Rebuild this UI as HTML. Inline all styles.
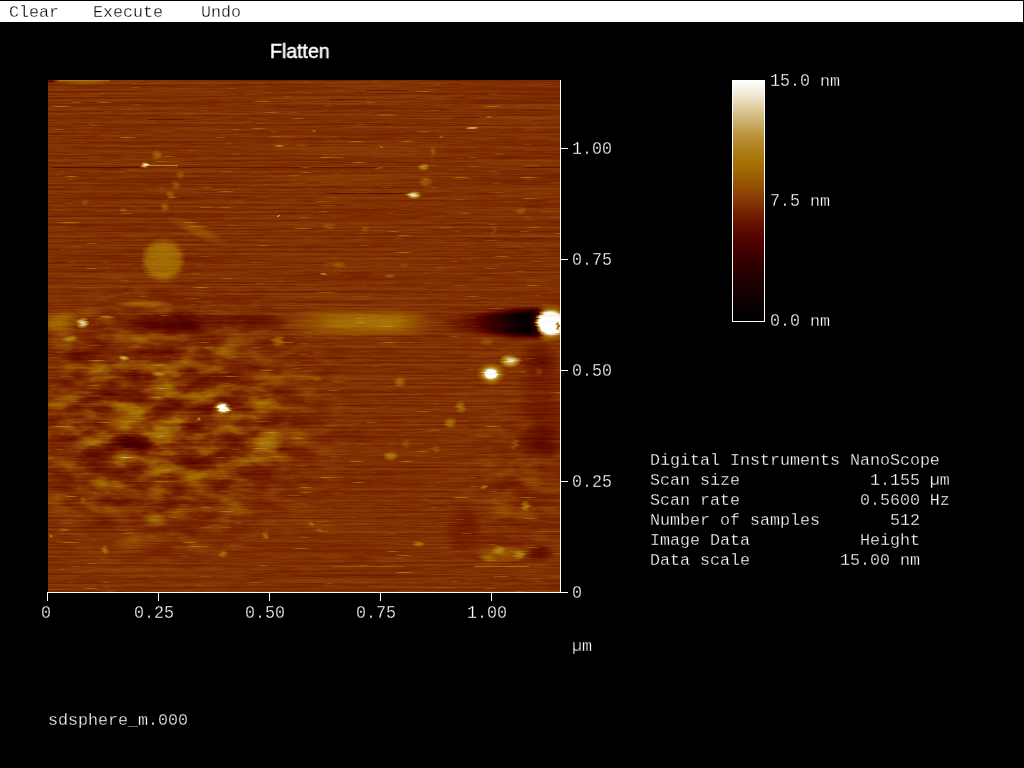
<!DOCTYPE html>
<html lang="en"><head><meta charset="utf-8"><title>Flatten - sdsphere_m.000</title>
<style>
html,body{margin:0;padding:0;background:#000;}
body{width:1024px;height:768px;overflow:hidden;position:relative;color:#fff;}
#screen{position:absolute;left:0;top:0;width:1024px;height:768px;will-change:transform;}
#menu{position:absolute;left:0;top:1px;width:1023px;height:21px;background:#fff;}
.m{position:absolute;font-family:"Liberation Mono",monospace;font-size:16.67px;line-height:20px;height:20px;white-space:pre;margin-top:-14px;letter-spacing:0px;-webkit-text-stroke:0.3px #000;}
.d{transform:scaleY(1.09);transform-origin:0 14px;}
.dg{display:inline-block;transform:scaleY(1.09);transform-origin:0 14px;}
.ln{position:absolute;background:#fff;}
#title{position:absolute;left:270px;top:39px;font-family:"Liberation Sans",sans-serif;font-size:20px;line-height:24px;white-space:pre;transform:scaleX(0.975);transform-origin:0 0;-webkit-text-stroke:0.45px #fff;}
</style></head>
<body>
<div id="screen">
<div id="menu"></div>
<div class="m" style="left:9px;top:17px;color:#000;-webkit-text-stroke-color:#fff;">Clear</div>
<div class="m" style="left:93px;top:17px;color:#000;-webkit-text-stroke-color:#fff;">Execute</div>
<div class="m" style="left:201px;top:17px;color:#000;-webkit-text-stroke-color:#fff;">Undo</div>
<div id="title">Flatten</div>
<svg id="afm" width="512" height="512" viewBox="0 0 512 512" style="position:absolute;left:48px;top:80px;display:block">
<defs>
<radialGradient id="gw"><stop offset="0" stop-color="#fff" stop-opacity="1"/><stop offset="0.45" stop-color="#fff" stop-opacity="0.7"/><stop offset="1" stop-color="#fff" stop-opacity="0"/></radialGradient>
<radialGradient id="gk"><stop offset="0" stop-color="#000" stop-opacity="1"/><stop offset="0.45" stop-color="#000" stop-opacity="0.7"/><stop offset="1" stop-color="#000" stop-opacity="0"/></radialGradient>
<radialGradient id="gW"><stop offset="0" stop-color="#fff" stop-opacity="1"/><stop offset="0.7" stop-color="#fff" stop-opacity="1"/><stop offset="1" stop-color="#fff" stop-opacity="0"/></radialGradient>
<radialGradient id="gK"><stop offset="0" stop-color="#000" stop-opacity="1"/><stop offset="0.7" stop-color="#000" stop-opacity="0.9"/><stop offset="1" stop-color="#000" stop-opacity="0"/></radialGradient>
<linearGradient id="band" x1="0" x2="1" y1="0" y2="0"><stop offset="0" stop-color="#fff" stop-opacity="0"/><stop offset="0.3" stop-color="#fff" stop-opacity="0.24"/><stop offset="0.75" stop-color="#fff" stop-opacity="0.27"/><stop offset="1" stop-color="#fff" stop-opacity="0"/></linearGradient>
<linearGradient id="shadow" x1="0" x2="1" y1="0" y2="0"><stop offset="0" stop-color="#000" stop-opacity="0"/><stop offset="0.25" stop-color="#000" stop-opacity="0.15"/><stop offset="0.42" stop-color="#000" stop-opacity="0.3"/><stop offset="0.66" stop-color="#000" stop-opacity="0.66"/><stop offset="0.82" stop-color="#000" stop-opacity="0.93"/><stop offset="1" stop-color="#000" stop-opacity="1"/></linearGradient>
<filter id="bl3" x="-10%" y="-30%" width="120%" height="160%" color-interpolation-filters="sRGB"><feGaussianBlur stdDeviation="2.5 2.6"/></filter>
<filter id="rough" x="0" y="0" width="512" height="512" filterUnits="userSpaceOnUse" color-interpolation-filters="sRGB">
<feTurbulence type="fractalNoise" baseFrequency="0.02 0.5" numOctaves="2" seed="5" result="t"/>
<feColorMatrix in="t" type="matrix" values="1 0 0 0 0  0 0.3 0 0 0.35  0 0 0 0 0  0 0 0 0 1" result="d"/>
<feDisplacementMap in="SourceGraphic" in2="d" scale="7" xChannelSelector="R" yChannelSelector="G"/>
</filter>
<filter id="mot" x="0" y="0" width="512" height="512" filterUnits="userSpaceOnUse" color-interpolation-filters="sRGB">
<feTurbulence type="fractalNoise" baseFrequency="0.03 0.075" numOctaves="3" seed="7" result="t"/>
<feColorMatrix in="t" type="matrix" values="0 0 0 0 1  0 0 0 0 1  0 0 0 0 1  1.35 0 0 0 -0.675" result="L"/>
<feColorMatrix in="t" type="matrix" values="0 0 0 0 0  0 0 0 0 0  0 0 0 0 0  -0.85 0 0 0 0.425" result="D"/>
<feMerge result="m"><feMergeNode in="L"/><feMergeNode in="D"/></feMerge>
<feComposite in="m" in2="SourceGraphic" operator="in"/>
</filter>
<filter id="cm" x="0" y="0" width="512" height="512" filterUnits="userSpaceOnUse" color-interpolation-filters="sRGB">
<feTurbulence type="fractalNoise" baseFrequency="0.04 0.9" numOctaves="2" seed="3" result="t"/>
<feColorMatrix in="t" type="matrix" values="1 0 0 0 0  1 0 0 0 0  1 0 0 0 0  0 0 0 0 1" result="n"/>
<feTurbulence type="fractalNoise" baseFrequency="0.005 0.45" numOctaves="2" seed="11" result="t2"/>
<feColorMatrix in="t2" type="matrix" values="1 0 0 0 0  1 0 0 0 0  1 0 0 0 0  0 0 0 0 1" result="n2"/>
<feComposite in="SourceGraphic" in2="n" operator="arithmetic" k1="0" k2="1" k3="0.07" k4="-0.035" result="h1"/>
<feComposite in="h1" in2="n2" operator="arithmetic" k1="0" k2="1" k3="0.11" k4="-0.055" result="h2"/>
<feTurbulence type="fractalNoise" baseFrequency="0.03 0.8" numOctaves="2" seed="21" result="t3"/>
<feColorMatrix in="t3" type="matrix" values="6 0 0 0 -4.32  6 0 0 0 -4.32  6 0 0 0 -4.32  0 0 0 0 1" result="n3"/>
<feComposite in="h2" in2="n3" operator="arithmetic" k1="0" k2="1" k3="0.22" k4="0" result="h"/>
<feComponentTransfer in="h">
<feFuncR type="table" tableValues="0.000 0.018 0.035 0.056 0.082 0.109 0.139 0.171 0.204 0.244 0.285 0.324 0.362 0.400 0.436 0.476 0.525 0.557 0.580 0.603 0.630 0.653 0.666 0.685 0.706 0.740 0.774 0.815 0.856 0.897 0.938 0.969 1.000"/>
<feFuncG type="table" tableValues="0.000 0.000 0.000 0.000 0.000 0.000 0.000 0.000 0.000 0.003 0.006 0.015 0.042 0.071 0.112 0.157 0.216 0.264 0.311 0.358 0.403 0.444 0.469 0.504 0.541 0.598 0.654 0.714 0.775 0.839 0.905 0.953 1.000"/>
<feFuncB type="table" tableValues="0.000 0.000 0.000 0.000 0.000 0.000 0.000 0.000 0.000 0.000 0.000 0.000 0.000 0.000 0.000 0.004 0.020 0.021 0.013 0.009 0.015 0.026 0.056 0.115 0.176 0.271 0.365 0.468 0.572 0.691 0.814 0.908 1.000"/>
</feComponentTransfer>
</filter>
</defs>
<g filter="url(#cm)">
<rect width="512" height="512" fill="#7c7c7c"/>
<g filter="url(#rough)">
<g filter="url(#mot)">
<ellipse cx="115" cy="342" rx="205" ry="152" fill="url(#gw)" fill-opacity="1"/>
<ellipse cx="470" cy="400" rx="70" ry="110" fill="url(#gw)" fill-opacity="0.4"/>
</g>

<rect x="236" y="232" width="150" height="21" rx="6" fill="url(#band)" filter="url(#bl3)"/>
<path d="M388,242 C 400,237 440,232 494,230 L 494,256 C 440,255 400,249 388,242 Z" fill="url(#shadow)" filter="url(#bl3)"/>

<ellipse cx="35" cy="2" rx="30" ry="3" fill="url(#gw)" fill-opacity="0.2"/>
<ellipse cx="3" cy="1" rx="6" ry="2" fill="url(#gk)" fill-opacity="0.3"/>
<ellipse cx="128" cy="243" rx="52" ry="13" fill="url(#gk)" fill-opacity="0.32"/>
<ellipse cx="200" cy="241" rx="45" ry="9" fill="url(#gk)" fill-opacity="0.18"/>
<ellipse cx="32" cy="277" rx="18" ry="10" fill="url(#gk)" fill-opacity="0.2"/>
<ellipse cx="66" cy="303" rx="10" ry="6" fill="url(#gk)" fill-opacity="0.2"/>
<ellipse cx="81" cy="364" rx="32" ry="12" fill="url(#gk)" fill-opacity="0.25"/>
<ellipse cx="126" cy="413" rx="15" ry="7" fill="url(#gk)" fill-opacity="0.2"/>
<ellipse cx="156" cy="435" rx="20" ry="5" fill="url(#gk)" fill-opacity="0.15"/>
<ellipse cx="491" cy="280" rx="22" ry="18" fill="url(#gk)" fill-opacity="0.16"/>
<ellipse cx="494" cy="335" rx="28" ry="75" fill="url(#gk)" fill-opacity="0.12"/>
<ellipse cx="490" cy="363" rx="24" ry="20" fill="url(#gk)" fill-opacity="0.15"/>
<ellipse cx="462" cy="405" rx="20" ry="10" fill="url(#gk)" fill-opacity="0.12"/>
<ellipse cx="492" cy="473" rx="14" ry="9" fill="url(#gk)" fill-opacity="0.22"/>
<ellipse cx="416" cy="452" rx="20" ry="28" fill="url(#gk)" fill-opacity="0.1"/>
<ellipse cx="322" cy="243" rx="50" ry="9" fill="url(#gw)" fill-opacity="0.12"/>
<ellipse cx="97" cy="85" rx="5" ry="3" fill="url(#gw)" fill-opacity="1"/>
<ellipse cx="109" cy="75" rx="6" ry="5" fill="url(#gw)" fill-opacity="0.3"/>
<ellipse cx="132" cy="95" rx="5" ry="5" fill="url(#gw)" fill-opacity="0.2"/>
<ellipse cx="128" cy="105" rx="5" ry="5" fill="url(#gw)" fill-opacity="0.2"/>
<ellipse cx="122" cy="115" rx="5" ry="5" fill="url(#gw)" fill-opacity="0.25"/>
<ellipse cx="117" cy="127" rx="5" ry="5" fill="url(#gw)" fill-opacity="0.25"/>
<ellipse cx="115" cy="180" rx="23" ry="23" fill="url(#gW)" fill-opacity="0.26"/>
<ellipse cx="115" cy="180" rx="20" ry="20" fill="url(#gw)" fill-opacity="0.12"/>
<ellipse cx="231" cy="66" rx="6" ry="1.5" fill="url(#gw)" fill-opacity="0.5"/>
<ellipse cx="230" cy="136" rx="1.5" ry="1.5" fill="url(#gw)" fill-opacity="0.8"/>
<ellipse cx="37" cy="122" rx="4" ry="4" fill="url(#gw)" fill-opacity="0.15"/>
<ellipse cx="75" cy="130" rx="4" ry="3" fill="url(#gw)" fill-opacity="0.15"/>
<ellipse cx="366" cy="115" rx="8" ry="4" fill="url(#gw)" fill-opacity="1"/>
<ellipse cx="376" cy="87" rx="6" ry="4" fill="url(#gw)" fill-opacity="0.5"/>
<ellipse cx="377" cy="102" rx="8" ry="6" fill="url(#gw)" fill-opacity="0.2"/>
<ellipse cx="385" cy="72" rx="3" ry="6" fill="url(#gw)" fill-opacity="0.2"/>
<ellipse cx="423" cy="48" rx="7" ry="1.5" fill="url(#gw)" fill-opacity="0.8"/>
<ellipse cx="473" cy="131" rx="6" ry="4" fill="url(#gw)" fill-opacity="0.2"/>
<ellipse cx="281" cy="146" rx="7" ry="4" fill="url(#gw)" fill-opacity="0.15"/>
<ellipse cx="317" cy="149" rx="5" ry="4" fill="url(#gw)" fill-opacity="0.15"/>
<ellipse cx="291" cy="185" rx="8" ry="4" fill="url(#gw)" fill-opacity="0.2"/>
<ellipse cx="356" cy="185" rx="6" ry="3" fill="url(#gw)" fill-opacity="0.12"/>
<ellipse cx="331" cy="88" rx="5" ry="2" fill="url(#gw)" fill-opacity="0.2"/>
<ellipse cx="446" cy="150" rx="3" ry="5" fill="url(#gw)" fill-opacity="0.12"/>
<ellipse cx="267" cy="51" rx="3" ry="1" fill="url(#gw)" fill-opacity="0.5"/>
<ellipse cx="333" cy="67" rx="2" ry="1" fill="url(#gw)" fill-opacity="0.5"/>
<ellipse cx="393" cy="57" rx="3" ry="1" fill="url(#gw)" fill-opacity="0.4"/>
<ellipse cx="441" cy="37" rx="4" ry="1" fill="url(#gw)" fill-opacity="0.4"/>
<ellipse cx="338" cy="35" rx="15" ry="1" fill="url(#gw)" fill-opacity="0.3"/>
<ellipse cx="35" cy="243" rx="7" ry="6" fill="url(#gw)" fill-opacity="0.9"/>
<ellipse cx="22" cy="259" rx="9" ry="3" fill="url(#gw)" fill-opacity="0.5"/>
<ellipse cx="59" cy="237" rx="9" ry="2" fill="url(#gw)" fill-opacity="0.45"/>
<ellipse cx="75" cy="278" rx="6" ry="3" fill="url(#gw)" fill-opacity="0.7"/>
<ellipse cx="110" cy="294" rx="8" ry="2.5" fill="url(#gw)" fill-opacity="0.5"/>
<ellipse cx="175" cy="328" rx="9" ry="7" fill="url(#gw)" fill-opacity="1"/>
<ellipse cx="175" cy="328" rx="6" ry="4.5" fill="url(#gW)" fill-opacity="0.9"/>
<ellipse cx="151" cy="339" rx="2" ry="2" fill="url(#gw)" fill-opacity="0.7"/>
<ellipse cx="230" cy="261" rx="8" ry="6" fill="url(#gw)" fill-opacity="0.35"/>
<ellipse cx="220" cy="362" rx="17" ry="12" fill="url(#gw)" fill-opacity="0.42"/>
<ellipse cx="95" cy="224" rx="28" ry="4" fill="url(#gw)" fill-opacity="0.3"/>
<ellipse cx="12" cy="242" rx="20" ry="14" fill="url(#gw)" fill-opacity="0.3"/>
<ellipse cx="75" cy="342" rx="50" ry="10" fill="url(#gw)" fill-opacity="0.15"/>
<ellipse cx="502.5" cy="243" rx="22" ry="20" fill="url(#gw)" fill-opacity="0.6"/>
<ellipse cx="502.5" cy="243" rx="16.5" ry="14.5" fill="url(#gW)" fill-opacity="1"/>
<ellipse cx="510.5" cy="246" rx="2.5" ry="5" fill="url(#gk)" fill-opacity="0.45"/>
<ellipse cx="443" cy="294" rx="15" ry="12" fill="url(#gw)" fill-opacity="0.5"/>
<ellipse cx="443" cy="294" rx="10.5" ry="8.5" fill="url(#gw)" fill-opacity="1"/>
<ellipse cx="443" cy="294" rx="7" ry="5.5" fill="url(#gW)" fill-opacity="0.95"/>
<ellipse cx="462" cy="281" rx="11" ry="7" fill="url(#gw)" fill-opacity="0.9"/>
<ellipse cx="352" cy="302" rx="7" ry="6" fill="url(#gw)" fill-opacity="0.3"/>
<ellipse cx="413" cy="327" rx="6" ry="7" fill="url(#gw)" fill-opacity="0.35"/>
<ellipse cx="402" cy="343" rx="7" ry="6" fill="url(#gw)" fill-opacity="0.35"/>
<ellipse cx="343" cy="376" rx="8" ry="5" fill="url(#gw)" fill-opacity="0.4"/>
<ellipse cx="268" cy="299" rx="7" ry="3" fill="url(#gw)" fill-opacity="0.2"/>
<ellipse cx="388" cy="369" rx="5" ry="5" fill="url(#gw)" fill-opacity="0.15"/>
<ellipse cx="358" cy="364" rx="5" ry="5" fill="url(#gw)" fill-opacity="0.15"/>
<ellipse cx="438" cy="262" rx="8" ry="4" fill="url(#gw)" fill-opacity="0.2"/>
<ellipse cx="491" cy="292" rx="5" ry="5" fill="url(#gw)" fill-opacity="0.15"/>
<ellipse cx="467" cy="364" rx="4" ry="7" fill="url(#gw)" fill-opacity="0.15"/>
<ellipse cx="276" cy="194" rx="4" ry="1.5" fill="url(#gw)" fill-opacity="0.6"/>
<ellipse cx="342" cy="196" rx="6" ry="2" fill="url(#gw)" fill-opacity="0.25"/>
<ellipse cx="107" cy="440" rx="13" ry="10" fill="url(#gw)" fill-opacity="0.25"/>
<ellipse cx="57" cy="470" rx="4" ry="5" fill="url(#gw)" fill-opacity="0.35"/>
<ellipse cx="176" cy="474" rx="5" ry="4" fill="url(#gw)" fill-opacity="0.35"/>
<ellipse cx="217" cy="456" rx="4" ry="5" fill="url(#gw)" fill-opacity="0.3"/>
<ellipse cx="35" cy="420" rx="4" ry="4" fill="url(#gw)" fill-opacity="0.2"/>
<ellipse cx="15" cy="450" rx="6" ry="2" fill="url(#gw)" fill-opacity="0.25"/>
<ellipse cx="3" cy="456" rx="2" ry="2" fill="url(#gw)" fill-opacity="0.5"/>
<ellipse cx="150" cy="407" rx="20" ry="5" fill="url(#gw)" fill-opacity="0.15"/>
<ellipse cx="477" cy="426" rx="5" ry="6" fill="url(#gw)" fill-opacity="0.4"/>
<ellipse cx="436" cy="407" rx="5" ry="2.5" fill="url(#gw)" fill-opacity="0.4"/>
<ellipse cx="370" cy="464" rx="7" ry="3" fill="url(#gw)" fill-opacity="0.4"/>
<ellipse cx="455" cy="474" rx="28" ry="9" fill="url(#gw)" fill-opacity="0.2"/>
<ellipse cx="451" cy="470" rx="8" ry="5" fill="url(#gw)" fill-opacity="0.4"/>
<ellipse cx="471" cy="475" rx="7" ry="5" fill="url(#gw)" fill-opacity="0.45"/>
<ellipse cx="440" cy="478" rx="10" ry="4" fill="url(#gw)" fill-opacity="0.25"/>
<ellipse cx="263" cy="444" rx="4" ry="3" fill="url(#gw)" fill-opacity="0.25"/>
<ellipse cx="272" cy="450" rx="5" ry="2" fill="url(#gw)" fill-opacity="0.2"/>
<ellipse cx="150" cy="151" rx="34" ry="7" fill="url(#gw)" fill-opacity="0.16" transform="rotate(24 150 151)"/>
</g>
<rect x="100" y="85" width="30" height="1" fill="#fff" fill-opacity="0.5"/>
<rect x="5" y="87" width="87" height="1" fill="#000" fill-opacity="0.18"/>
<rect x="130" y="87" width="200" height="1" fill="#000" fill-opacity="0.14"/>
<rect x="476" y="87" width="36" height="1" fill="#000" fill-opacity="0.1"/>
<rect x="281" y="113" width="75" height="1" fill="#000" fill-opacity="0.15"/>
<rect x="100" y="39" width="35" height="1" fill="#000" fill-opacity="0.15"/>
<rect x="318" y="10" width="43" height="1" fill="#000" fill-opacity="0.15"/>
<rect x="281" y="19" width="37" height="1" fill="#000" fill-opacity="0.12"/>
<rect x="406" y="37" width="25" height="1" fill="#000" fill-opacity="0.15"/>
<rect x="426" y="486" width="55" height="1" fill="#fff" fill-opacity="0.35"/>
<rect x="286" y="486" width="70" height="1" fill="#fff" fill-opacity="0.18"/>
<rect x="10" y="0" width="52" height="1" fill="#fff" fill-opacity="0.25"/>
</g>
</svg>
<div class="ln" style="left:560px;top:80px;width:1px;height:513px"></div>
<div class="ln" style="left:47px;top:592px;width:521px;height:1px"></div>
<div class="ln" style="left:561px;top:148px;width:7px;height:1px"></div>
<div class="m d" style="left:572px;top:154px;">1.00</div>
<div class="ln" style="left:561px;top:259px;width:7px;height:1px"></div>
<div class="m d" style="left:572px;top:265px;">0.75</div>
<div class="ln" style="left:561px;top:370px;width:7px;height:1px"></div>
<div class="m d" style="left:572px;top:376px;">0.50</div>
<div class="ln" style="left:561px;top:481px;width:7px;height:1px"></div>
<div class="m d" style="left:572px;top:487px;">0.25</div>
<div class="m d" style="left:572px;top:598px;">0</div>
<div class="ln" style="left:47px;top:593px;width:1px;height:8px"></div>
<div class="m d" style="left:41px;top:618px;">0</div>
<div class="ln" style="left:158px;top:593px;width:1px;height:8px"></div>
<div class="m d" style="left:134px;top:618px;">0.25</div>
<div class="ln" style="left:269px;top:593px;width:1px;height:8px"></div>
<div class="m d" style="left:245px;top:618px;">0.50</div>
<div class="ln" style="left:380px;top:593px;width:1px;height:8px"></div>
<div class="m d" style="left:356px;top:618px;">0.75</div>
<div class="ln" style="left:491px;top:593px;width:1px;height:8px"></div>
<div class="m d" style="left:467px;top:618px;">1.00</div>
<div class="m" style="left:572px;top:651px;">µm</div>
<svg width="33" height="242" style="position:absolute;left:732px;top:80px;display:block"><defs><linearGradient id="cb" x1="0" y1="0" x2="0" y2="1"><stop offset="0.0000" stop-color="#ffffff"/><stop offset="0.0600" stop-color="#f0e8d2"/><stop offset="0.1200" stop-color="#dcc896"/><stop offset="0.1850" stop-color="#c6a85f"/><stop offset="0.2500" stop-color="#b48a2d"/><stop offset="0.3100" stop-color="#aa780f"/><stop offset="0.3500" stop-color="#a67005"/><stop offset="0.4150" stop-color="#985802"/><stop offset="0.4800" stop-color="#8c3f06"/><stop offset="0.5000" stop-color="#863705"/><stop offset="0.5400" stop-color="#762400"/><stop offset="0.6000" stop-color="#641000"/><stop offset="0.6650" stop-color="#500200"/><stop offset="0.7500" stop-color="#340000"/><stop offset="0.8330" stop-color="#1e0000"/><stop offset="0.9170" stop-color="#0c0000"/><stop offset="1.0000" stop-color="#000000"/></linearGradient></defs><rect x="0" y="0" width="33" height="242" fill="#fff"/><rect x="1" y="1" width="31" height="240" fill="url(#cb)"/></svg>
<div class="m" style="left:770px;top:86px"><span class="dg">15.0</span> nm</div>
<div class="m" style="left:770px;top:206px"><span class="dg">7.5</span> nm</div>
<div class="m" style="left:770px;top:326px"><span class="dg">0.0</span> nm</div>
<div class="m" style="left:650px;top:465px;">Digital Instruments NanoScope</div>
<div class="m" style="left:650px;top:485px;">Scan size             1.155 µm</div>
<div class="m" style="left:650px;top:505px;">Scan rate            0.5600 Hz</div>
<div class="m" style="left:650px;top:525px;">Number of samples       512</div>
<div class="m" style="left:650px;top:545px;">Image Data           Height</div>
<div class="m" style="left:650px;top:565px;">Data scale         15.00 nm</div>
<div class="m" style="left:48px;top:725px;">sdsphere_m.000</div>
</div>
</body></html>
